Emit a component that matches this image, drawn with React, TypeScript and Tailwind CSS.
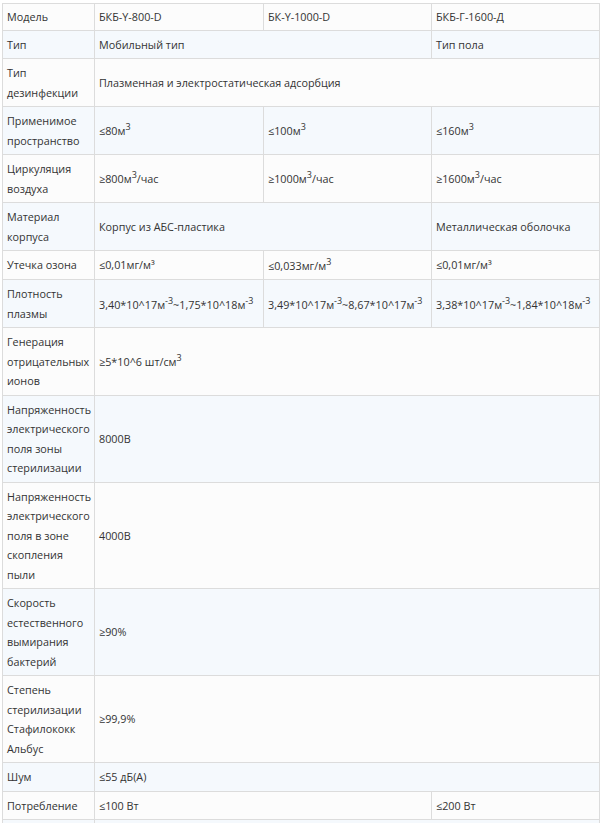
import React from "react";

type Cell = { content: React.ReactNode; span?: number };
type Row = { label: React.ReactNode; cells: Cell[] };

const Sup = ({ children }: { children: React.ReactNode }) => (
  <sup className="top-0 align-super text-[smaller] leading-normal">{children}</sup>
);

const rows: Row[] = [
  {
    label: "Модель",
    cells: [
      { content: "БКБ-Y-800-D" },
      { content: "БК-Y-1000-D" },
      { content: "БКБ-Г-1600-Д" },
    ],
  },
  {
    label: "Тип",
    cells: [{ content: "Мобильный тип", span: 2 }, { content: "Тип пола" }],
  },
  {
    label: "Тип дезинфекции",
    cells: [{ content: "Плазменная и электростатическая адсорбция", span: 3 }],
  },
  {
    label: "Применимое пространство",
    cells: [
      { content: <>≤80м<Sup>3</Sup></> },
      { content: <>≤100м<Sup>3</Sup></> },
      { content: <>≤160м<Sup>3</Sup></> },
    ],
  },
  {
    label: "Циркуляция воздуха",
    cells: [
      { content: <>≥800м<Sup>3</Sup>/час</> },
      { content: <>≥1000м<Sup>3</Sup>/час</> },
      { content: <>≥1600м<Sup>3</Sup>/час</> },
    ],
  },
  {
    label: "Материал корпуса",
    cells: [
      { content: "Корпус из АБС-пластика", span: 2 },
      { content: "Металлическая оболочка" },
    ],
  },
  {
    label: "Утечка озона",
    cells: [
      { content: "≤0,01мг/м³" },
      { content: <>≤0,033мг/м<Sup>3</Sup></> },
      { content: "≤0,01мг/м³" },
    ],
  },
  {
    label: "Плотность плазмы",
    cells: [
      { content: <>3,40*10^17м<Sup>-3</Sup>~1,75*10^18м<Sup>-3</Sup></> },
      { content: <>3,49*10^17м<Sup>-3</Sup>~8,67*10^17м<Sup>-3</Sup></> },
      { content: <>3,38*10^17м<Sup>-3</Sup>~1,84*10^18м<Sup>-3</Sup></> },
    ],
  },
  {
    label: "Генерация отрицательных ионов",
    cells: [{ content: <>≥5*10^6 шт/см<Sup>3</Sup></>, span: 3 }],
  },
  {
    label: "Напряженность электрического поля зоны стерилизации",
    cells: [{ content: "8000В", span: 3 }],
  },
  {
    label: "Напряженность электрического поля в зоне скопления пыли",
    cells: [{ content: "4000В", span: 3 }],
  },
  {
    label: "Скорость естественного вымирания бактерий",
    cells: [{ content: "≥90%", span: 3 }],
  },
  {
    label: "Степень стерилизации Стафилококк Альбус",
    cells: [{ content: "≥99,9%", span: 3 }],
  },
  {
    label: "Шум",
    cells: [{ content: "≤55 дБ(А)", span: 3 }],
  },
  {
    label: "Потребление",
    cells: [{ content: "≤100 Вт", span: 2 }, { content: "≤200 Вт" }],
  },
  {
    label: "\u00a0",
    cells: [{ content: "\u00a0", span: 3 }],
  },
];

export default function App() {
  return (
    <div className="min-h-screen bg-white pt-[3px] pl-[2px] font-['Open_Sans',sans-serif] text-[10.8px] leading-[19.5px] text-[#333]">
      <table className="w-[597px] table-fixed border-collapse">
        <colgroup>
          <col className="w-[92px]" />
          <col className="w-[169px]" />
          <col className="w-[168px]" />
          <col className="w-[168px]" />
        </colgroup>
        <tbody>
          {rows.map((row, i) => {
            const pad = i === 0 ? "px-1 py-[3px]" : "p-1";
            return (
              <tr key={i} className={i % 2 === 0 ? "bg-[#fcfcfc]" : "bg-[#f5f9fd]"}>
                <td className={`border border-[#dcdcdc] ${pad} align-middle`}>{row.label}</td>
                {row.cells.map((cell, j) => (
                  <td
                    key={j}
                    colSpan={cell.span ?? 1}
                    className={`border border-[#dcdcdc] ${pad} align-middle whitespace-nowrap`}
                  >
                    {cell.content}
                  </td>
                ))}
              </tr>
            );
          })}
        </tbody>
      </table>
    </div>
  );
}
